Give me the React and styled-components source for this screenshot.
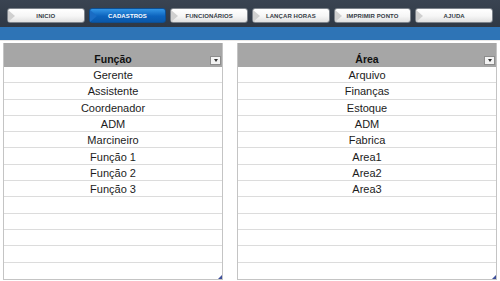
import React from 'react';
import styled, { createGlobalStyle } from 'styled-components';

const GlobalStyle = createGlobalStyle`
  body {
    margin: 0;
    background: #ffffff;
    font-family: "Liberation Sans", Arial, sans-serif;
  }
`;

const Page = styled.div`
  width: 500px;
  height: 281px;
  overflow: hidden;
  display: flex;
  flex-direction: column;
`;

const NavBar = styled.div`
  height: 27px;
  box-sizing: border-box;
  background: linear-gradient(#3a4452, #2f3844);
  display: flex;
  gap: 4px;
  padding: 8px 7px 0 7px;
`;

const NavButton = styled.div`
  position: relative;
  width: 78px;
  height: 15px;
  box-sizing: border-box;
  border-radius: 3px;
  border: 1px solid ${(p) => (p.active ? '#0d4f93' : '#7d838b')};
  background: ${(p) =>
    p.active
      ? 'linear-gradient(#3396e6, #0c63bd 55%, #0a58aa)'
      : 'linear-gradient(#ffffff, #f6f6f6 55%, #e0e0e0)'};
  color: ${(p) => (p.active ? '#ffffff' : '#343a44')};
  font-size: 6px;
  font-weight: bold;
  display: flex;
  align-items: center;
  justify-content: center;
  letter-spacing: 0.1px;

  &::before {
    content: '';
    position: absolute;
    left: 0;
    top: 1px;
    border-top: 6px solid transparent;
    border-bottom: 6px solid transparent;
    border-left: 7px solid ${(p) => (p.active ? '#1a6cc4' : '#d0d0d0')};
  }
`;

const BlueBand = styled.div`
  height: 13px;
  background: #2e74b6;
  border-bottom: 1px solid #e8e8e8;
`;

const Content = styled.div`
  flex: 1;
  display: flex;
  gap: 14px;
  padding: 2px 3px 0 3px;
`;

const Table = styled.div`
  position: relative;
  width: ${(p) => p.width}px;
  box-sizing: border-box;
  border-left: 1px solid #c4c4c4;
  border-right: 1px solid #c4c4c4;
  border-bottom: 1px solid #c4c4c4;
  display: flex;
  flex-direction: column;
  height: 237px;

  &::after {
    content: '';
    position: absolute;
    right: 0;
    bottom: 0;
    border-left: 4px solid transparent;
    border-bottom: 4px solid #3d4f9a;
  }
`;

const Header = styled.div`
  position: relative;
  height: 24px;
  box-sizing: border-box;
  background: #a6a6a6;
  display: flex;
  align-items: flex-end;
  justify-content: center;
  padding-bottom: 2px;
  font-size: 10.5px;
  font-weight: bold;
  color: #111;
`;

const Dropdown = styled.div`
  position: absolute;
  right: 1px;
  bottom: 2px;
  width: 11px;
  height: 9px;
  box-sizing: border-box;
  background: #f3f3f3;
  border: 1px solid #8c8c8c;
  display: flex;
  align-items: center;
  justify-content: center;

  &::before {
    content: '';
    border-left: 2.5px solid transparent;
    border-right: 2.5px solid transparent;
    border-top: 3px solid #333;
  }
`;

const Row = styled.div`
  height: 16.4px;
  box-sizing: border-box;
  border-bottom: 1px solid #dcdcdc;
  display: flex;
  align-items: center;
  justify-content: center;
  padding-top: 1px;
  font-size: 11px;
  color: #1c1c1c;

  &:last-child {
    border-bottom: none;
  }
`;

const menu = ['INICIO', 'CADASTROS', 'FUNCIONÁRIOS', 'LANÇAR HORAS', 'IMPRIMIR PONTO', 'AJUDA'];
const funcoes = ['Gerente', 'Assistente', 'Coordenador', 'ADM', 'Marcineiro', 'Função 1', 'Função 2', 'Função 3'];
const areas = ['Arquivo', 'Finanças', 'Estoque', 'ADM', 'Fabrica', 'Area1', 'Area2', 'Area3'];

function DataTable({ title, items, width }) {
  const rows = [...items];
  while (rows.length < 13) rows.push('');
  return (
    <Table width={width}>
      <Header>
        {title}
        <Dropdown />
      </Header>
      {rows.map((r, i) => (
        <Row key={i}>{r}</Row>
      ))}
    </Table>
  );
}

export default function App() {
  return (
    <Page>
      <GlobalStyle />
      <NavBar>
        {menu.map((m) => (
          <NavButton key={m} active={m === 'CADASTROS'}>
            {m}
          </NavButton>
        ))}
      </NavBar>
      <BlueBand />
      <Content>
        <DataTable title="Função" items={funcoes} width={221} />
        <DataTable title="Área" items={areas} width={261} />
      </Content>
    </Page>
  );
}
